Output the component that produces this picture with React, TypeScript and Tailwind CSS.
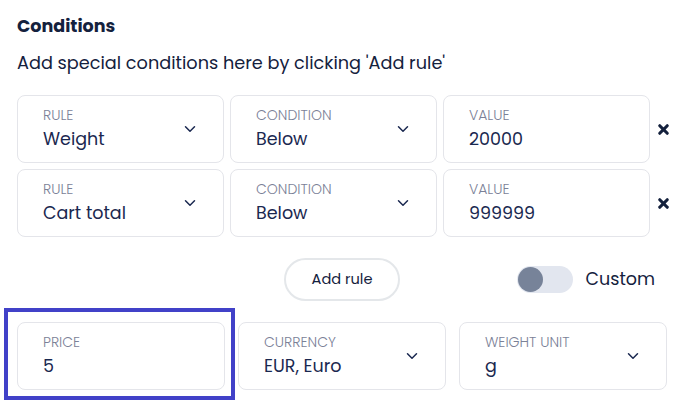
import { ChevronDown, X } from 'lucide-react'

const font = { fontFamily: 'Poppins, "Open Sans", "Noto Sans", sans-serif' }

function Field({ label, value, select }: { label: string; value: string; select?: boolean }) {
  return (
    <div className="flex h-[68px] items-center justify-between rounded-lg border border-[#e4e5ea] bg-white pl-[25px] pr-[24px]">
      <div className="flex flex-col pt-[3px]">
        <span className="text-[14px] font-light leading-[16px] uppercase text-[#7b8197]">{label}</span>
        <span className="mt-[2px] text-[17.5px] leading-[29px] text-[#1a2850]">{value}</span>
      </div>
      {select && <ChevronDown className="h-[18px] w-[18px] text-[#1a2850]" strokeWidth={2} />}
    </div>
  )
}

const rules = [
  { rule: 'Weight', condition: 'Below', value: '20000' },
  { rule: 'Cart total', condition: 'Below', value: '999999' },
]

export default function App() {
  return (
    <div className="h-[404px] w-[684px] overflow-hidden bg-white pl-[17px] pr-[17px] pt-[14px]" style={font}>
      <h2 className="text-[17.5px] font-bold leading-[24px] text-[#14213d]">Conditions</h2>
      <p className="mt-[13px] text-[17.7px] leading-[24px] text-[#14213d]">
        Add special conditions here by clicking 'Add rule'
      </p>

      {/* rule rows */}
      <div className="mt-[20px] flex flex-col gap-[6px]">
        {rules.map((r, i) => (
          <div key={i} className="grid grid-cols-[207px_207px_207px_1fr] gap-[6px]">
            <Field label="Rule" value={r.rule} select />
            <Field label="Condition" value={r.condition} select />
            <Field label="Value" value={r.value} />
            <div className="flex items-center justify-end">
              <X className="h-[15px] w-[15px] text-[#14213d]" strokeWidth={5} />
            </div>
          </div>
        ))}
      </div>

      <div className="mt-[21px] grid grid-cols-[1fr_auto_1fr] items-center">
        <div />
        <button className="h-[43px] w-[116px] rounded-full border-2 border-[#e4e7ea] text-[14.6px] text-[#14213d]">
          Add rule
        </button>
        <div className="flex items-center justify-end gap-[13px] pr-[12px]">
          <div className="flex h-[27px] w-[56px] items-center rounded-full bg-[#e2e6ef] pl-[1px]">
            <div className="h-[25px] w-[25px] rounded-full bg-[#778399]" />
          </div>
          <span className="text-[17.5px] text-[#14213d]">Custom</span>
        </div>
      </div>

      <div className="relative mt-[21px] grid grid-cols-3 gap-[13px]">
        <div className="absolute -left-[13px] -top-[14px] h-[92px] w-[231px] border-4 border-[#4141c8]" />
        <Field label="Price" value="5" />
        <Field label="Currency" value="EUR, Euro" select />
        <Field label="Weight unit" value="g" select />
      </div>
    </div>
  )
}
